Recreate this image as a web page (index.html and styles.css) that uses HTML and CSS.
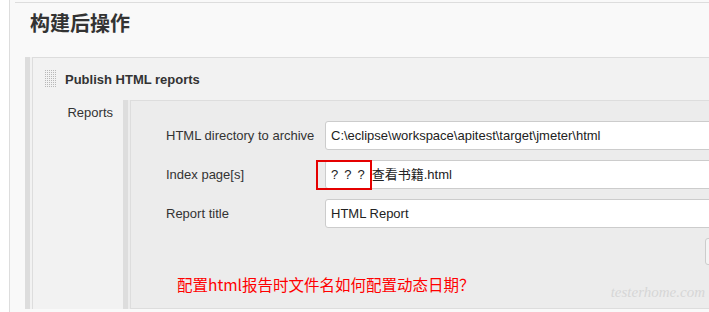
FILE: index.html
```html
<!DOCTYPE html>
<html lang="zh-CN">
<head>
    <meta charset="UTF-8">
    <meta name="viewport" content="width=device-width, initial-scale=1.0">
    <title>构建后操作</title>
    <link rel="stylesheet" href="styles.css">
</head>
<body>

    <div class="page">
        <div class="section-header">
            <h2>构建后操作</h2>
        </div>

        <div class="chunk">
            <div class="chunk-body">
                <div class="chunk-title">
                    <svg class="handle" width="12" height="18" viewBox="0 0 12 18">
                        <defs>
                            <pattern id="dots" width="2" height="2" patternUnits="userSpaceOnUse">
                                <rect width="1" height="1" fill="#b8b8b8"/>
                            </pattern>
                        </defs>
                        <rect width="12" height="18" fill="url(#dots)"/>
                    </svg>
                    <span>Publish HTML reports</span>
                </div>

                <div class="entry">
                    <div class="entry-label">Reports</div>
                    <div class="repeat">
                        <div class="repeat-body">
                            <div class="field">
                                <label>HTML directory to archive</label>
                                <div class="input">C:\eclipse\workspace\apitest\target\jmeter\html</div>
                            </div>
                            <div class="field">
                                <label>Index page[s]</label>
                                <div class="input">
                                    <span class="garbled">???</span><span class="file">查看书籍.html</span>
                                    <span class="mark"></span>
                                </div>
                            </div>
                            <div class="field">
                                <label>Report title</label>
                                <div class="input">HTML Report</div>
                            </div>
                            <div class="actions">
                                <button type="button" class="btn" title="Delete"></button>
                            </div>
                            <p class="note">配置html报告时文件名如何配置动态日期？</p>
                        </div>
                    </div>
                </div>
            </div>
        </div>

        <div class="watermark">testerhome.com</div>
    </div>

</body>
</html>
```

FILE: styles.css
```css
body {
    margin: 0;
    background-color: #fff;
    font-family: 'Liberation Sans', Arial, 'Noto Sans CJK SC', sans-serif;
    font-size: 13px;
    color: #333;
    overflow: hidden;
}
.page {
    position: relative;
    height: 100vh;
    box-sizing: border-box;
    margin-left: 9px;
    padding: 2px 0 0 5px;
    border-left: 1px solid #ddd;
    background-color: #f9f9f9;
}
.section-header {
    border-top: 1px solid #ddd;
}
.section-header h2 {
    margin: 0;
    padding: 6px 0 0 15px;
    font-family: 'Noto Sans CJK SC', sans-serif;
    font-size: 20px;
    font-weight: bold;
    line-height: 28px;
    color: #333;
}
.chunk {
    margin: 20px 0 0 10px;
    padding-left: 2px;
    border-left: 5px solid #ddd;
    background-color: #f2f2f2;
}
.chunk-body {
    border-left: 1px solid #ddd;
    border-top: 1px solid #ddd;
}
.chunk-title {
    display: flex;
    align-items: center;
    gap: 8px;
    height: 42px;
    padding-left: 12px;
    font-weight: bold;
    color: #333;
}
.handle {
    display: block;
}
.entry {
    display: flex;
}
.entry-label {
    width: 90px;
    flex-shrink: 0;
    box-sizing: border-box;
    padding: 5px 10px 0 0;
    line-height: 16px;
    text-align: right;
}
.repeat {
    flex-shrink: 0;
    padding-left: 2px;
    border-left: 5px solid #ddd;
    background-color: #ececec;
}
.repeat-body {
    width: 640px;
    padding: 20px 0 0 35px;
    border-left: 1px solid #ddd;
    border-top: 1px solid #ddd;
    border-bottom: 1px solid #ddd;
}
.field {
    display: flex;
    align-items: center;
    margin-bottom: 10px;
}
.field label {
    width: 159px;
    flex-shrink: 0;
}
.input {
    position: relative;
    width: 420px;
    height: 29px;
    box-sizing: border-box;
    padding: 0 5px;
    border: 1px solid #ccc;
    border-radius: 3px;
    background-color: #fff;
    line-height: 27px;
    white-space: nowrap;
    color: #222;
}
.garbled {
    letter-spacing: 6px;
}
.file {
    margin-left: 1px;
}
.mark {
    position: absolute;
    left: -10px;
    top: -1px;
    width: 56px;
    height: 30px;
    box-sizing: border-box;
    border: 2px solid #e50000;
}
.actions {
    display: flex;
    margin-top: 1px;
}
.btn {
    width: 60px;
    height: 27px;
    margin-left: 539px;
    border: 1px solid #ccc;
    border-radius: 3px;
    background-color: #f4f4f4;
}
.note {
    margin: 9px 0 0 11px;
    padding-bottom: 14px;
    font-family: 'Noto Sans CJK SC', sans-serif;
    font-size: 15.5px;
    line-height: 20px;
    color: #f00;
}
.watermark {
    position: absolute;
    right: 4px;
    bottom: 11px;
    font-family: 'Liberation Serif', serif;
    font-style: italic;
    font-size: 15px;
    color: #d6d6d6;
}
```
